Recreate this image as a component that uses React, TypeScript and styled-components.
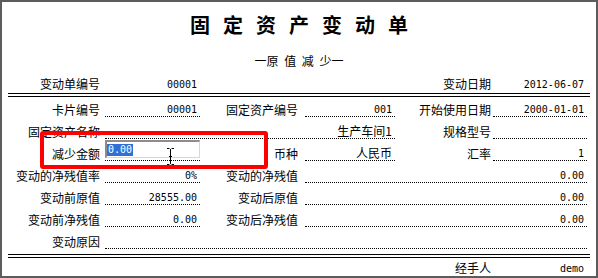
import React from "react";
import styled, { createGlobalStyle } from "styled-components";

const Global = createGlobalStyle`
  html, body { margin: 0; padding: 0; background: #fff; }
  body { font-family: "Noto Sans CJK SC", sans-serif; color: #000; }
`;

const Window = styled.div`
  position: relative;
  box-sizing: border-box;
  width: 598px;
  height: 278px;
  border: 2px solid #5c5c5c;
  background: #fff;
  overflow: hidden;
  display: flex;
  flex-direction: column;
`;

const Title = styled.div`
  margin-top: 12px;
  height: 22px;
  line-height: 22px;
  text-align: center;
  font-size: 20px;
  font-weight: 700;
  letter-spacing: 13px;
  padding-left: 13px;
  font-family: "Noto Sans CJK SC", serif;
`;

const Subtitle = styled.div`
  margin-top: 17px;
  height: 16px;
  line-height: 16px;
  text-align: center;
  font-size: 12px;
  word-spacing: 3px;
`;

const FormGrid = styled.div<{ $rowH: number; $mt: number }>`
  display: grid;
  grid-template-columns: 103px 95px 105px 90px 98px 94px;
  grid-auto-rows: ${(p) => p.$rowH}px;
  row-gap: 2px;
  margin-top: ${(p) => p.$mt}px;
`;

const Label = styled.div<{ $pr: number }>`
  display: flex;
  justify-content: flex-end;
  align-items: flex-end;
  padding-right: ${(p) => p.$pr}px;
  font-size: 12px;
  line-height: 14px;
  white-space: nowrap;
`;

const Field = styled.div<{ $span?: number; $plain?: boolean }>`
  grid-column: span ${(p) => p.$span ?? 1};
  display: flex;
  justify-content: flex-end;
  align-items: flex-end;
  padding-right: 3px;
  border-bottom: ${(p) => (p.$plain ? "none" : "1px dotted #000")};
  font-family: "DejaVu Sans Mono", "Liberation Mono", monospace;
  font-size: 10px;
  line-height: 13px;
  white-space: nowrap;
`;

const CnValue = styled.span`
  font-family: "Noto Sans CJK SC", sans-serif;
  font-size: 12px;
  line-height: 14px;
`;

const InputCell = styled.div`
  display: flex;
  align-items: flex-start;
  border-bottom: 1px dotted #000;
`;

const InputBox = styled.div`
  box-sizing: border-box;
  width: 95px;
  height: 18px;
  margin-top: -1px;
  border-top: 2px solid #8c8c8c;
  border-left: 2px solid #8c8c8c;
  border-right: 1px solid #d8d8d8;
  border-bottom: 1px solid #d8d8d8;
  background: #fff;
  display: flex;
  align-items: center;
  padding-left: 0;
`;

const Selected = styled.span`
  display: inline-block;
  background: #2f6fd6;
  color: #fff;
  font-family: "DejaVu Sans Mono", "Liberation Mono", monospace;
  font-size: 10px;
  line-height: 12px;
  height: 12px;
  padding: 0 1px;
`;

const DoubleRule = styled.div<{ $mt: number }>`
  margin: ${(p) => p.$mt}px 6px 0 6px;
  height: 4px;
  box-sizing: border-box;
  border-top: 1px solid #000;
  border-bottom: 1px solid #000;
`;

const Highlight = styled.div`
  position: absolute;
  left: 38px;
  top: 129px;
  width: 228px;
  height: 38px;
  box-sizing: border-box;
  border: 4px solid #ff0000;
  border-radius: 3px;
  pointer-events: none;
`;

const Cursor = styled.svg`
  position: absolute;
  left: 164px;
  top: 145px;
`;

export default function App() {
  return (
    <>
      <Global />
      <Window>
        <Title>固定资产变动单</Title>
        <Subtitle>一原 值 减 少一</Subtitle>

        <FormGrid $rowH={16} $mt={6}>
          <Label $pr={5}>变动单编号</Label>
          <Field $plain>00001</Field>
          <Label $pr={7}></Label>
          <Field $plain></Field>
          <Label $pr={2}>变动日期</Label>
          <Field $plain>2012-06-07</Field>
        </FormGrid>

        <DoubleRule $mt={2} />

        <FormGrid $rowH={20} $mt={0}>
          <Label $pr={5}>卡片编号</Label>
          <Field>00001</Field>
          <Label $pr={7}>固定资产编号</Label>
          <Field>001</Field>
          <Label $pr={2}>开始使用日期</Label>
          <Field>2000-01-01</Field>

          <Label $pr={5}>固定资产名称</Label>
          <Field $span={3}>
            <CnValue>生产车间1</CnValue>
          </Field>
          <Label $pr={2}>规格型号</Label>
          <Field></Field>

          <Label $pr={5}>减少金额</Label>
          <InputCell>
            <InputBox>
              <Selected>0.00</Selected>
            </InputBox>
          </InputCell>
          <Label $pr={7}>币种</Label>
          <Field>
            <CnValue>人民币</CnValue>
          </Field>
          <Label $pr={2}>汇率</Label>
          <Field>1</Field>

          <Label $pr={5}>变动的净残值率</Label>
          <Field>0%</Field>
          <Label $pr={7}>变动的净残值</Label>
          <Field $span={3}>0.00</Field>

          <Label $pr={5}>变动前原值</Label>
          <Field>28555.00</Field>
          <Label $pr={7}>变动后原值</Label>
          <Field $span={3}>0.00</Field>

          <Label $pr={5}>变动前净残值</Label>
          <Field>0.00</Field>
          <Label $pr={7}>变动后净残值</Label>
          <Field $span={3}>0.00</Field>

          <Label $pr={5}>变动原因</Label>
          <Field $span={5}></Field>
        </FormGrid>

        <DoubleRule $mt={5} />

        <FormGrid $rowH={16} $mt={1}>
          <Label $pr={5}></Label>
          <Field $plain></Field>
          <Label $pr={7}></Label>
          <Field $plain></Field>
          <Label $pr={2}>经手人</Label>
          <Field $plain>demo</Field>
        </FormGrid>

        <Highlight />
        <Cursor width="9" height="19" viewBox="0 0 9 19">
          <path
            d="M1 1.5h2.5M5.5 1.5H8M4.5 2v15M1 17.5h2.5M5.5 17.5H8M3 9.5h3"
            stroke="#000"
            strokeWidth="1"
            fill="none"
          />
        </Cursor>
      </Window>
    </>
  );
}
